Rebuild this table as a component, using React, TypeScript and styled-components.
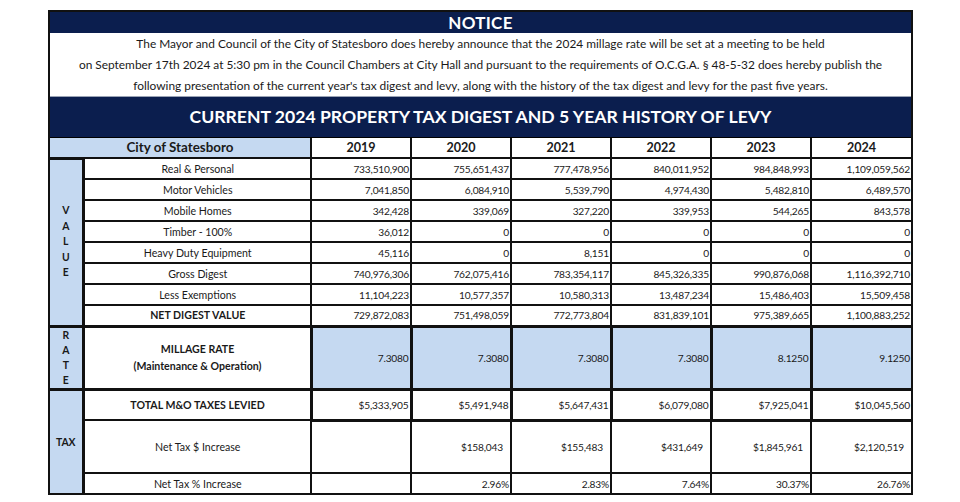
import React from "react";
import styled, { createGlobalStyle } from "styled-components";

const GlobalStyle = createGlobalStyle`
  html, body { margin: 0; padding: 0; background: #ffffff; }
  body { font-family: "Lato", "Liberation Sans", sans-serif; color: #1a1a1a; }
`;

const NAVY = "#0b1e4e";
const LIGHT = "#c5d9f1";

const Page = styled.div`
  padding: 10px 0 0 48px;
  width: 865px;
`;

const Frame = styled.div`
  border: 2px solid #111;
  width: 861px;
  background: #fff;
`;

const NoticeBar = styled.div`
  background: ${NAVY};
  color: #fff;
  font-weight: 700;
  font-size: 17px;
  height: 21px;
  line-height: 21px;
  text-align: center;
  letter-spacing: 0.3px;
`;

const NoticeText = styled.div`
  background: #fff;
  font-size: 11.9px;
  line-height: 21px;
  text-align: center;
  padding: 0;
  height: 64px;
  border-bottom: 1px solid #9aa3b5;
  box-sizing: border-box;
`;

const TitleBar = styled.div`
  background: ${NAVY};
  color: #fff;
  font-weight: 700;
  font-size: 17.6px;
  height: 40px;
  line-height: 40px;
  text-align: center;
  border-bottom: 1px solid #000;
`;

const Table = styled.table`
  width: 861px;
  border-collapse: collapse;
  border-style: hidden;
  table-layout: fixed;
  font-size: 10.6px;
`;

const Cell = styled.td<{ $align?: "left" | "center" | "right"; $bg?: string; $bold?: boolean; $pr?: number; $thick?: boolean }>`
  border: ${(p) => (p.$thick ? "3px" : "2px")} solid #111;
  background: ${(p) => p.$bg || "#fff"};
  text-align: ${(p) => p.$align || "right"};
  font-weight: ${(p) => (p.$bold ? 700 : 400)};
  font-size: 10.2px;
  letter-spacing: -0.2px;
  padding: 0 ${(p) => p.$pr ?? 1}px 0 2px;
  vertical-align: middle;
  white-space: nowrap;
  overflow: hidden;
  line-height: 14px;
`;

const HeadCell = styled.th<{ $bg?: string; $size?: number }>`
  border: 2px solid #111;
  background: ${(p) => p.$bg || "#fff"};
  font-weight: 700;
  font-size: ${(p) => p.$size ?? 12.6}px;
  text-align: center;
  padding: 0;
  line-height: 16px;
`;

const SideCell = styled.td`
  border: 3px solid #111;
  background: ${LIGHT};
  text-align: center;
  vertical-align: middle;
  padding: 0;
  font-weight: 700;
  font-size: 10.4px;
`;

const Stack = styled.div<{ $gap: number }>`
  display: flex;
  flex-direction: column;
  align-items: center;
  line-height: ${(p) => p.$gap}px;
`;

const Row = styled.tr<{ $h: number }>`
  height: ${(p) => p.$h}px;
`;

const Label = styled(Cell)`
  text-align: center;
  font-size: 10.6px;
  letter-spacing: 0;
`;

const years = ["2019", "2020", "2021", "2022", "2023", "2024"];

const valueRows: { label: string; vals: string[]; bold?: boolean }[] = [
  { label: "Real & Personal", vals: ["733,510,900", "755,651,437", "777,478,956", "840,011,952", "984,848,993", "1,109,059,562"] },
  { label: "Motor Vehicles", vals: ["7,041,850", "6,084,910", "5,539,790", "4,974,430", "5,482,810", "6,489,570"] },
  { label: "Mobile Homes", vals: ["342,428", "339,069", "327,220", "339,953", "544,265", "843,578"] },
  { label: "Timber - 100%", vals: ["36,012", "0", "0", "0", "0", "0"] },
  { label: "Heavy Duty Equipment", vals: ["45,116", "0", "8,151", "0", "0", "0"] },
  { label: "Gross Digest", vals: ["740,976,306", "762,075,416", "783,354,117", "845,326,335", "990,876,068", "1,116,392,710"] },
  { label: "Less Exemptions", vals: ["11,104,223", "10,577,357", "10,580,313", "13,487,234", "15,486,403", "15,509,458"] },
  { label: "NET DIGEST VALUE", bold: true, vals: ["729,872,083", "751,498,059", "772,773,804", "831,839,101", "975,389,665", "1,100,883,252"] },
];

const rates = ["7.3080", "7.3080", "7.3080", "7.3080", "8.1250", "9.1250"];
const levied = ["$5,333,905", "$5,491,948", "$5,647,431", "$6,079,080", "$7,925,041", "$10,045,560"];
const netDollar = ["", "$158,043", "$155,483", "$431,649", "$1,845,961", "$2,120,519"];
const netPct = ["", "2.96%", "2.83%", "7.64%", "30.37%", "26.76%"];

export default function App() {
  return (
    <>
      <GlobalStyle />
      <Page>
        <Frame>
          <NoticeBar>NOTICE</NoticeBar>
          <NoticeText>
            The Mayor and Council of the City of Statesboro does hereby announce that the 2024 millage rate will be set at a meeting to be held
            <br />
            on September 17th 2024 at 5:30 pm in the Council Chambers at City Hall and pursuant to the requirements of O.C.G.A. § 48-5-32 does hereby publish the
            <br />
            following presentation of the current year's tax digest and levy, along with the history of the tax digest and levy for the past five years.
          </NoticeText>
          <TitleBar>CURRENT 2024 PROPERTY TAX DIGEST AND 5 YEAR HISTORY OF LEVY</TitleBar>
          <Table>
            <colgroup>
              <col style={{ width: 33 }} />
              <col style={{ width: 228 }} />
              {years.map((y) => (
                <col key={y} />
              ))}
            </colgroup>
            <tbody>
              <Row $h={20}>
                <HeadCell colSpan={2} $bg={LIGHT} $size={13.4}>
                  City of Statesboro
                </HeadCell>
                {years.map((y) => (
                  <HeadCell key={y}>{y}</HeadCell>
                ))}
              </Row>
              {valueRows.map((r, i) => (
                <Row $h={21} key={r.label}>
                  {i === 0 && (
                    <SideCell rowSpan={8}>
                      <Stack $gap={15.5}>
                        <span>V</span>
                        <span>A</span>
                        <span>L</span>
                        <span>U</span>
                        <span>E</span>
                      </Stack>
                    </SideCell>
                  )}
                  <Label $bold={r.bold}>{r.label}</Label>
                  {r.vals.map((v, j) => (
                    <Cell key={j}>{v}</Cell>
                  ))}
                </Row>
              ))}
              <Row $h={61}>
                <SideCell>
                  <Stack $gap={15}>
                    <span>R</span>
                    <span>A</span>
                    <span>T</span>
                    <span>E</span>
                  </Stack>
                </SideCell>
                <Label $bold $thick>
                  <Stack $gap={17}>
                    <span>MILLAGE RATE</span>
                    <span>(Maintenance &amp; Operation)</span>
                  </Stack>
                </Label>
                {rates.map((v, j) => (
                  <Cell key={j} $bg={LIGHT} $thick>
                    {v}
                  </Cell>
                ))}
              </Row>
              <Row $h={31}>
                <SideCell rowSpan={3}>TAX</SideCell>
                <Label $bold>TOTAL M&amp;O TAXES LEVIED</Label>
                {levied.map((v, j) => (
                  <Cell key={j} $thick>
                    {v}
                  </Cell>
                ))}
              </Row>
              <Row $h={53}>
                <Label>Net Tax $ Increase</Label>
                {netDollar.map((v, j) => (
                  <Cell key={j} $pr={7}>
                    {v}
                  </Cell>
                ))}
              </Row>
              <Row $h={20}>
                <Label>Net Tax % Increase</Label>
                {netPct.map((v, j) => (
                  <Cell key={j}>{v}</Cell>
                ))}
              </Row>
            </tbody>
          </Table>
        </Frame>
      </Page>
    </>
  );
}
